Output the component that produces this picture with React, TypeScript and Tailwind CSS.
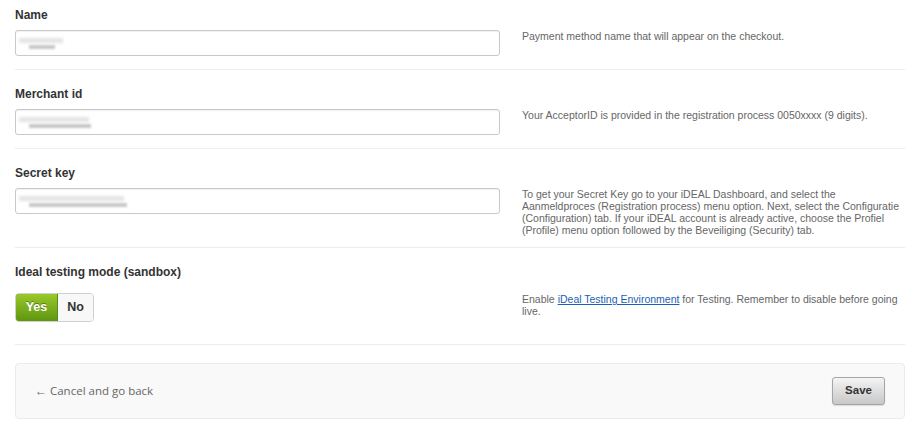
import React from "react";

function Blur({ w1, w2 }: { w1: number; w2: number }) {
  return (
    <div className="flex flex-col gap-[2px] pl-[3px] pt-[7px]">
      <div className="h-[5px] bg-[#e4e4e4] blur-[1.5px]" style={{ width: w1 }} />
      <div className="h-[4px] bg-[#c8c8c8] blur-[1px] ml-[10px]" style={{ width: w2 }} />
    </div>
  );
}

function FakeInput({ w1, w2 }: { w1: number; w2: number }) {
  return (
    <div className="h-[26px] w-[485px] rounded-[3px] border border-[#c9c9c9] bg-white shadow-[inset_0_1px_1px_rgba(0,0,0,0.06)]">
      <Blur w1={w1} w2={w2} />
    </div>
  );
}

function Row({
  label,
  children,
  help,
  first,
  tall,
}: {
  label: string;
  children: React.ReactNode;
  help: React.ReactNode;
  first?: boolean;
  tall?: boolean;
}) {
  return (
    <div
      className={`flex items-start border-b border-[#ededed] ${first ? "pt-[7px]" : "pt-[16px]"} ${
        tall ? "pb-[11px]" : "pb-[13px]"
      }`}
    >
      <div className="w-[485px] shrink-0">
        <div className="mb-[7px] h-[16px] text-[12px] font-bold leading-[16px] text-[#333]">{label}</div>
        {children}
      </div>
      <div className="ml-[22px] mt-[23px] flex-1 whitespace-nowrap text-[10.5px] leading-[12px] text-[#666]">{help}</div>
    </div>
  );
}

export default function App() {
  return (
    <div className="w-[913px] bg-white pl-[15px] pr-[8px] font-['Liberation_Sans',Arial,sans-serif]">
      <Row first label="Name" help="Payment method name that will appear on the checkout.">
        <FakeInput w1={44} w2={26} />
      </Row>
      <Row label="Merchant id" help="Your AcceptorID is provided in the registration process 0050xxxx (9 digits).">
        <FakeInput w1={70} w2={62} />
      </Row>
      <Row
        tall
        label="Secret key"
        help={
          <>
            To get your Secret Key go to your iDEAL Dashboard, and select the
            <br />
            Aanmeldproces (Registration process) menu option. Next, select the Configuratie
            <br />
            (Configuration) tab. If your iDEAL account is already active, choose the Profiel
            <br />
            (Profile) menu option followed by the Beveiliging (Security) tab.
          </>
        }
      >
        <FakeInput w1={105} w2={98} />
      </Row>
      <div className="flex items-start border-b border-[#ededed] pt-[16px] pb-[22px]">
        <div className="w-[485px] shrink-0">
          <div className="mb-[13px] h-[16px] text-[12px] font-bold leading-[16px] text-[#333]">
            Ideal testing mode (sandbox)
          </div>
          <div className="flex h-[29px] w-[79px] overflow-hidden rounded-[4px] border border-[#cfcfcf] text-[12.5px] font-bold">
            <div className="-m-px mr-0 flex w-[43px] items-center justify-center rounded-l-[4px] border border-[#5a8a12] bg-gradient-to-b from-[#98c82a] to-[#5e9610] text-white [text-shadow:0_-1px_0_rgba(0,0,0,0.35)]">
              Yes
            </div>
            <div className="flex flex-1 items-center justify-center bg-[#f8f8f8] text-[#333]">No</div>
          </div>
        </div>
        <div className="ml-[22px] mt-[29px] flex-1 whitespace-nowrap text-[10.5px] leading-[12px] text-[#666]">
          Enable{" "}
          <a href="#" className="text-[#1a5fb4] underline">
            iDeal Testing Environment
          </a>{" "}
          for Testing. Remember to disable before going
          <br />
          live.
        </div>
      </div>
      <div className="mt-[18px] flex h-[56px] items-center justify-between rounded-[4px] border border-[#ebebeb] bg-[#f9f9f9] pl-[19px] pr-[19px]">
        <span className="font-['Open_Sans',sans-serif] text-[11.5px] text-[#666]">
          <span className="text-[12px]">←</span> Cancel and go back
        </span>
        <button className="h-[28px] w-[53px] rounded-[3px] border border-[#a5a5a5] bg-gradient-to-b from-[#f4f4f4] to-[#c8c8c8] text-[11.5px] font-bold text-[#333] shadow-[0_1px_1px_rgba(0,0,0,0.12)]">
          Save
        </button>
      </div>
      <div className="h-[8px]" />
    </div>
  );
}
